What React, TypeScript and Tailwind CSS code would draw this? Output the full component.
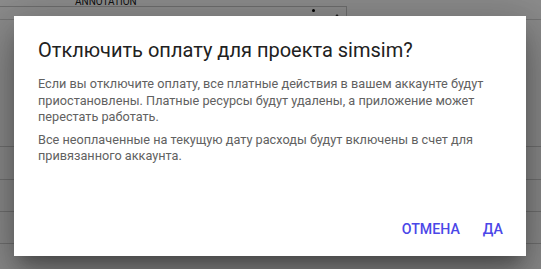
import React from "react";

export default function App() {
  return (
    <div className="relative w-[541px] h-[269px] overflow-hidden bg-white font-['Roboto',sans-serif]">
      {/* underlying page */}
      <div className="flex flex-col">
        <div className="flex h-[20px] border-b border-[#d6d6d6]">
          <div className="relative mt-[6px] w-[347px] h-[40px] border-t border-r border-[#c8c8c8]">
            <span className="absolute left-[75px] top-[-11px] text-[10px] leading-[11px] text-[#222]">ANNOTATION</span>
            <span className="absolute left-[312px] top-[2px] w-[3px] h-[3px] rounded-full bg-black" />
            <span className="absolute left-[333px] top-[7px] w-0 h-0 border-l-[4px] border-r-[4px] border-b-[5px] border-l-transparent border-r-transparent border-b-[#333]" />
          </div>
        </div>
        <div className="h-[127px] border-b border-[#d0d0d0]" />
        <div className="h-[33px] border-b border-[#d0d0d0]" />
        <div className="h-[32px] border-b border-[#d0d0d0]" />
        <div className="h-[32px] border-b border-[#d0d0d0]" />
      </div>

      {/* scrim */}
      <div className="absolute inset-0 bg-black/[0.45]" />

      {/* dialog */}
      <div className="absolute left-[14px] top-[16px] w-[512px] h-[240px] bg-white shadow-[0_11px_15px_-7px_rgba(0,0,0,0.3),0_24px_38px_3px_rgba(0,0,0,0.2),0_9px_46px_8px_rgba(0,0,0,0.18)] flex flex-col pl-[24px] pr-[15px] pt-[20px] pb-[8px]">
        <h2 className="text-[20px] leading-[28px] text-[#212121] font-normal">
          Отключить оплату для проекта simsim?
        </h2>
        <div className="mt-[12px] pr-[6px] text-[12.7px] leading-[16.5px] text-[#616161] flex flex-col gap-[6px]">
          <p>
            Если вы отключите оплату, все платные действия в вашем аккаунте будут приостановлены. Платные ресурсы будут удалены, а приложение может перестать работать.
          </p>
          <p>
            Все неоплаченные на текущую дату расходы будут включены в счет для привязанного аккаунта.
          </p>
        </div>
        <div className="mt-auto flex justify-end gap-[7px]">
          <button className="px-[8px] h-[36px] text-[14.2px] font-medium text-[#4b47e8] uppercase">Отмена</button>
          <button className="px-[8px] h-[36px] text-[14.2px] font-medium text-[#4b47e8] uppercase">Да</button>
        </div>
      </div>
    </div>
  );
}
